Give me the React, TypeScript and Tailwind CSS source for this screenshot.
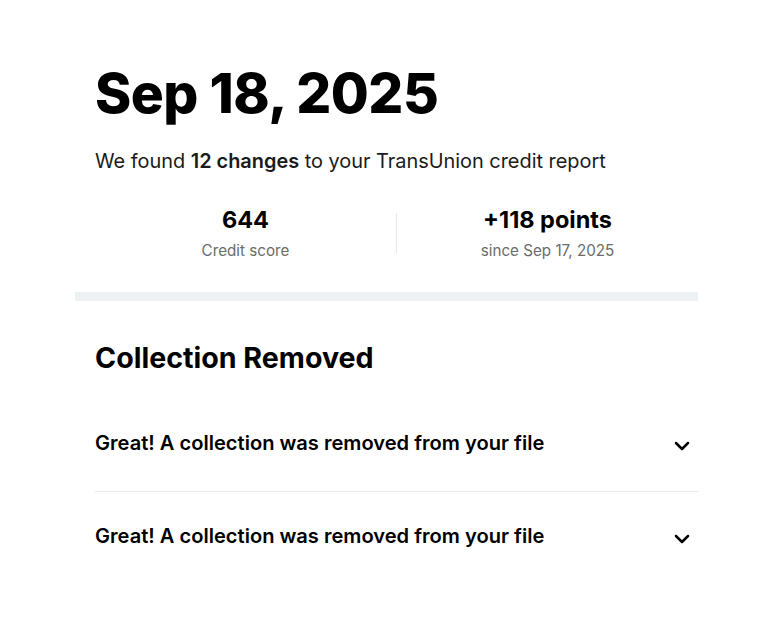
import { ChevronDown } from "lucide-react";

const items = [
	"Great! A collection was removed from your file",
	"Great! A collection was removed from your file",
];

export default function App() {
	return (
		<div className="min-h-screen bg-white font-['Inter',sans-serif] text-black">
			<main className="ml-[95px] w-[603px] pt-[61px]">
				{/* Header */}
				<h1 className="text-[55px] font-extrabold leading-[64px] tracking-[-0.5px]">Sep 18, 2025</h1>
				<p className="mt-[22px] text-[19.9px] leading-[28px] text-[#1a1a1a]">
					We found <span className="font-semibold">12 changes</span> to your TransUnion credit report
				</p>

				{/* Stats */}
				<div className="mt-[30px] flex items-center">
					<div className="flex-1 text-center">
						<p className="text-[23.5px] font-bold leading-[30px]">644</p>
						<p className="mt-[6px] text-[15.2px] leading-[20px] text-[#6b6b6b]">Credit score</p>
					</div>
					<div className="h-[40px] w-px bg-[#e6eaef]" />
					<div className="flex-1 text-center">
						<p className="text-[23.5px] font-bold leading-[30px]">+118 points</p>
						<p className="mt-[6px] text-[15.2px] leading-[20px] text-[#6b6b6b]">since Sep 17, 2025</p>
					</div>
				</div>

				<div className="-ml-[20px] mt-[31px] h-[9px] w-[623px] bg-[#eef1f4]" />

				{/* Collection removed */}
				<h2 className="mt-[39px] text-[28.6px] font-bold leading-[36px]">Collection Removed</h2>

				<div className="mt-[23px]">
					{items.map((text, i) => (
						<div
							key={i}
							className={`flex items-center justify-between pt-[31px] pb-[35px] ${i > 0 ? "border-t border-[#e6e9ed]" : ""}`}
						>
							<p className="text-[20.1px] font-semibold leading-[26px]">{text}</p>
							<ChevronDown className="-mb-[3px] mr-[4px] mt-[3px] h-[24px] w-[24px] shrink-0" strokeWidth={2.5} />
						</div>
					))}
				</div>
			</main>
		</div>
	);
}
